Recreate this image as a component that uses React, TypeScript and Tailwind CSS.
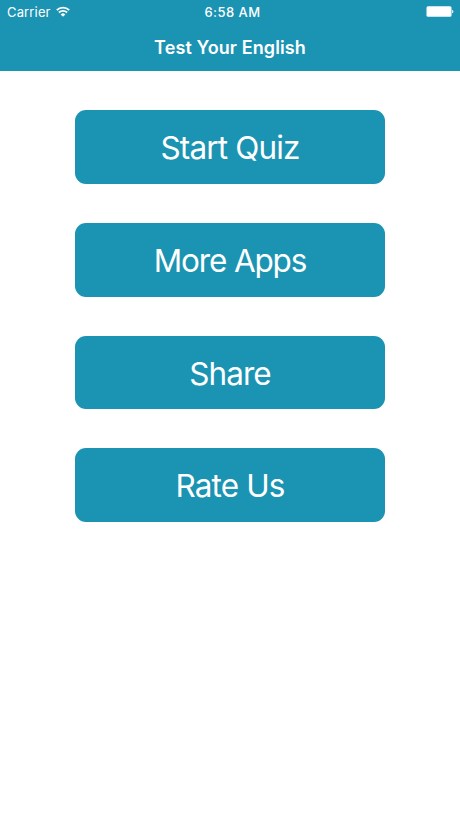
interface MenuItem {
  label: string;
  className: string;
}

const menuItems: MenuItem[] = [
  { label: "Start Quiz", className: "h-[74px] tracking-[-0.85px]" },
  { label: "More Apps", className: "h-[74px] tracking-[-1.15px]" },
  { label: "Share", className: "h-[73px] tracking-[-0.95px]" },
  { label: "Rate Us", className: "h-[74px] tracking-[-0.85px]" },
];

function WifiIcon() {
  return (
    <svg viewBox="0 0 14 11" className="mb-px w-[14px] h-[11px]" fill="none" stroke="white" strokeWidth="1.8">
      <path d="M0.8 4.1a8.8 8.8 0 0 1 12.4 0" />
      <path d="M2.9 6.5a5.8 5.8 0 0 1 8.2 0" />
      <path d="M7 10.8 4.7 8.4a3.2 3.2 0 0 1 4.6 0Z" fill="white" stroke="none" />
    </svg>
  );
}

function StatusBar() {
  return (
    <div className="grid grid-cols-3 items-center h-6 pl-[7px] pr-[6px] text-[13px]">
      <div className="flex items-center gap-[5px]">
        <span className="pt-px tracking-[0.15px]">Carrier</span>
        <WifiIcon />
      </div>
      <span className="pl-[4px] pt-px text-center font-medium tracking-[0.45px]">6:58 AM</span>
      <svg viewBox="0 0 28 12" className="w-7 h-3 justify-self-end" fill="white">
        <rect x="0.5" y="0.3" width="25" height="10.5" rx="1.5" />
        <path d="M26.2 3.8v3.6c.8-.3 1.2-.9 1.2-1.8s-.4-1.5-1.2-1.8Z" />
      </svg>
    </div>
  );
}

export default function App() {
  return (
    <div className="min-h-screen bg-white text-white font-[Inter,sans-serif]">
      <header className="h-[71px] bg-[#1b93b2]">
        <StatusBar />
        <h1 className="text-center text-[18px] leading-[47px] font-semibold tracking-[0.1px]">
          Test Your English
        </h1>
      </header>
      <main className="flex flex-col gap-[39px] px-[75px] pt-[39.4px]">
        {menuItems.map((item) => (
          <button
            key={item.label}
            className={`${item.className} w-full rounded-[11px] bg-[#1b93b2] pt-px text-[31.5px]`}
          >
            {item.label}
          </button>
        ))}
      </main>
    </div>
  );
}
